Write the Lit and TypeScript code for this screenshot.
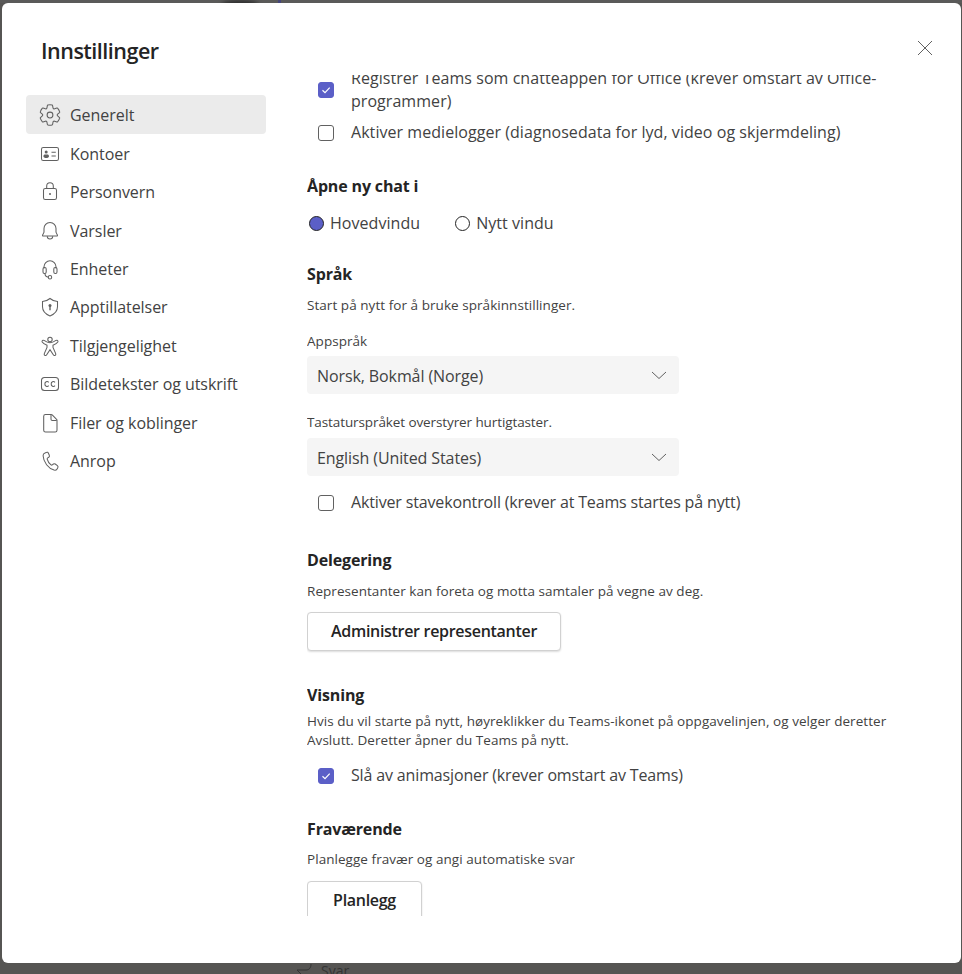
import { LitElement, html, css, svg } from "lit";
import { customElement } from "lit/decorators.js";

const navIcons = [
  svg`<path d="M2.3 8.9A10 10 0 0 1 4.4 5.2a.6.6 0 0 1 .65-.16l2.3.82a1.2 1.2 0 0 0 1.58-.91l.44-2.4a.6.6 0 0 1 .47-.48 10.2 10.2 0 0 1 4.27 0c.24.05.42.24.46.48l.44 2.4a1.2 1.2 0 0 0 1.58.91l2.3-.82a.6.6 0 0 1 .65.16 10 10 0 0 1 2.14 3.7c.07.24 0 .48-.18.65l-1.87 1.58a1.2 1.2 0 0 0 0 1.82l1.87 1.58c.18.17.25.41.18.65a10 10 0 0 1-2.14 3.7.6.6 0 0 1-.65.16l-2.3-.82a1.2 1.2 0 0 0-1.58.91l-.44 2.4a.6.6 0 0 1-.46.48 10.2 10.2 0 0 1-4.27 0 .6.6 0 0 1-.47-.48l-.44-2.4a1.2 1.2 0 0 0-1.58-.91l-2.3.82a.6.6 0 0 1-.65-.16 10 10 0 0 1-2.14-3.7.6.6 0 0 1 .18-.65l1.87-1.58a1.2 1.2 0 0 0 0-1.82L2.48 9.55a.6.6 0 0 1-.18-.65Z"/><circle cx="12" cy="12" r="2.9"/>`,
  svg`<rect x="3.5" y="5.5" width="17" height="13" rx="1.8"/><circle class="f" cx="8.2" cy="10" r="1.5"/><path class="f" d="M5.4 14.2c0-1 .8-1.6 1.6-1.6h2.4c.8 0 1.6.6 1.6 1.6 0 1.2-1.3 1.8-2.8 1.8s-2.8-.6-2.8-1.8Z"/><path d="M13.5 10.3h4.3M13.5 14h4.3"/>`,
  svg`<rect x="5.5" y="8.5" width="13" height="11" rx="1.8"/><path d="M8.7 8.5V6a3.3 3.3 0 0 1 6.6 0v2.5"/><circle class="f" cx="12" cy="14" r="1"/>`,
  svg`<path d="M12 3.5c-3.6 0-6 2.7-6 6v3.6l-1.4 3a.6.6 0 0 0 .55.9h13.7a.6.6 0 0 0 .55-.9l-1.4-3V9.500c0-3.300-2.400-6-6-6Z"/><path d="M9.300 17.200a2.700 2.700 0 0 0 5.400 0"/>`,
  svg`<path d="M6 11.500V9.800a6 6 0 0 1 12 0v1.700"/><rect x="5" y="10.500" width="3.200" height="6" rx="1.400"/><rect x="15.800" y="10.500" width="3.200" height="6" rx="1.400"/><path d="M7 16.500c0 2.200 1.700 3.500 3.500 3.700"/><circle cx="12" cy="20.300" r="1.700"/>`,
  svg`<path d="M12 3.500c2.200 1.900 4.400 2.800 7.500 3v5.300c0 4.300-2.500 7.200-7.500 9.200-5-2-7.500-4.900-7.500-9.200V6.500c3.100-.2 5.300-1.100 7.500-3Z"/><circle class="f" cx="12" cy="10.500" r="1.500"/><path d="M12 11v4.200" stroke-width="1.400"/>`,
  svg`<circle cx="12" cy="5.500" r="2.200"/><path d="M5 6.300c-.8.300-1.200 1-.8 1.800.3.500 3.500 2.600 4.800 3.100v2.200l-2.700 6.200c-.3.800 0 1.500.700 1.800.700.200 1.300 0 1.700-.7L12 15.600l3.300 5.100c.4.700 1 .9 1.700.7.700-.3 1-1 .7-1.800L15 13.400v-2.200c1.300-.5 4.500-2.600 4.800-3.100.4-.8 0-1.500-.8-1.800-.6-.2-1.100.1-1.500.4-1.700 1.300-3.500 2-5.500 2s-3.800-.7-5.500-2c-.4-.3-.9-.6-1.500-.4Z"/>`,
  svg`<rect x="3.500" y="5.500" width="17" height="13" rx="3"/><path d="M10.700 10.300a2.200 2.200 0 0 0-3.800 1.700 2.200 2.200 0 0 0 3.800 1.700M17 10.300a2.200 2.200 0 0 0-3.800 1.700 2.200 2.200 0 0 0 3.800 1.700"/>`,
  svg`<path d="M7.500 3.500h5.700c.4 0 .7.100 1 .4l4.400 4.400c.3.300.4.600.4 1v9.900c0 1-.8 1.800-1.800 1.800H7.500c-1 0-1.800-.8-1.800-1.800V5.300c0-1 .8-1.800 1.800-1.800Z"/><path d="M13 3.800v4.400c0 .7.600 1.300 1.300 1.300h4.400"/>`,
  svg`<path d="M8.800 3.300 7 3.900C5.800 4.300 5 5.400 5.100 6.800c.3 6.300 5.300 12.700 11 14.300 1.200.3 2.400-.2 3-1.200l.7-1.200c.4-.7.200-1.500-.4-2l-2.200-1.700c-.6-.4-1.300-.4-1.800 0l-1.100.9c-.4.300-.9.300-1.300 0-1.900-1.500-3.200-3.500-3.800-5.800-.1-.5.100-.9.500-1.200l1.100-.7c.6-.4.800-1.200.5-1.900l-1-2.300c-.3-.7-1-1-1.500-.7Z"/>`,
];

const navLabels = ["Generelt", "Kontoer", "Personvern", "Varsler", "Enheter", "Apptillatelser", "Tilgjengelighet", "Bildetekster og utskrift", "Filer og koblinger", "Anrop"];

@customElement("app-root")
export class AppRoot extends LitElement {
  static styles = css`
    :host { display: block; width: 962px; height: 974px; overflow: hidden; background: #565553;
      font-family: "Open Sans", "Noto Sans", sans-serif; color: #242424; font-size: 16px; letter-spacing: 0.05px; }
    * { box-sizing: border-box; }
    .top { height: 3px; display: flex; background: #5a5a59; overflow: hidden; }
    .blob { margin-left: 222px; width: 36px; height: 8px; border-radius: 50%; background: #2f2f2f; filter: blur(2px); }
    .mark { margin-left: 20px; width: 3px; height: 3px; background: #45457a; }
    .dialog { display: grid; grid-template-columns: 284px 1fr; width: 959px; height: 960px; margin: 0 0 0 2px;
      background: #fff; border-radius: 6px; }
    .side { padding: 0 0 0 24px; display: flex; flex-direction: column; }
    h1 { margin: 0; height: 92px; padding: 32px 0 0 15px; font-size: 21.500px; font-weight: 600; line-height: 32px; letter-spacing: -0.5px; }
    nav { display: flex; flex-direction: column; width: 240px; }
    .item { display: flex; align-items: center; gap: 8px; height: 38.450px; padding: 1px 0 0 12px; border-radius: 4px; color: #424242; line-height: 20px; letter-spacing: -0.05px; }
    .item.on { background: #ebebeb; height: 39px; padding-top: 0; }
    .ico { width: 24px; height: 24px; flex: none; fill: none; stroke: #616161; stroke-width: 1.050; }
    .ico .f { fill: #616161; stroke: none; }
    .main { min-width: 0; display: flex; flex-direction: column; padding-left: 21px; }
    .close { height: 72px; flex: none; display: flex; justify-content: flex-end; padding: 37px 28px 0 0; }
    .close svg { width: 16px; height: 16px; stroke: #616161; stroke-width: 1; fill: none; }
    .scroll { height: 841px; overflow: hidden; width: 610px; }
    .content { margin-top: -8px; display: flex; flex-direction: column; }
    .check { display: flex; align-items: center; gap: 17px; padding-left: 11px; line-height: 23px; color: #424242; }
    .tight { letter-spacing: -0.15px; }
    .box { width: 16px; height: 16px; flex: none; border: 1px solid #616161; border-radius: 3px;
      display: flex; align-items: center; justify-content: center; }
    .box.on { background: #5b5fc7; border-color: #5b5fc7; }
    .box svg { width: 12px; height: 12px; fill: none; stroke: #fff; stroke-width: 1.200; }
    h2 { margin: 0; font-size: 16px; font-weight: 700; line-height: 22px; letter-spacing: -0.15px; }
    .radios { display: flex; align-items: center; margin-top: 15px; height: 22px; color: #424242; }
    .radio { width: 15px; height: 15px; border-radius: 50%; border: 1px solid #242424; margin: 0 6px 0 2px; flex: none; }
    .radio.on { background: #5b5fc7; }
    .gap { width: 33px; flex: none; }
    .desc { margin: 0; font-size: 13.500px; line-height: 19px; color: #424242; letter-spacing: 0.05px; }
    .desc.tight { letter-spacing: -0.1px; }
    .select { display: flex; align-items: center; justify-content: space-between; width: 372px; height: 38px; background: #f5f5f5;
      border-radius: 4px; padding: 0 12px 0 10px; color: #424242; letter-spacing: -0.1px; }
    .select span { padding-top: 2px; }
    .select svg { width: 16px; height: 16px; fill: none; stroke: #616161; stroke-width: 1; }
    .btn { display: inline-flex; align-items: center; justify-content: center; height: 39px; border: 1px solid #d1d1d1; border-radius: 4px;
      background: #fff; font-weight: 600; box-shadow: 0 1px 2px rgba(0,0,0,.14); color: #242424; font-family: inherit; font-size: 16px; letter-spacing: -.3px; padding: 0 0 1px; flex: none; }
    .foot { height: 11px; overflow: hidden; display: flex; align-items: flex-start; gap: 8px; padding-left: 296px; color: #343434; font-size: 14px; }
    .foot svg { width: 17px; height: 11px; fill: none; stroke: #343434; stroke-width: 1; flex: none; }
    .foot span { line-height: 16px; }
  `;

  private box(on: boolean) {
    return html`<span class="box ${on ? "on" : ""}">${on ? html`<svg viewBox="0 0 12 12"><path d="M2.500 6.300 5 8.700 9.700 3.600"/></svg>` : ""}</span>`;
  }

  private chevron() {
    return html`<svg viewBox="0 0 16 16"><path d="M1 5l7 6.500L15 5"/></svg>`;
  }

  render() {
    return html`
      <div class="top"><span class="blob"></span><span class="mark"></span></div>
      <div class="dialog">
        <aside class="side">
          <h1>Innstillinger</h1>
          <nav>
            ${navLabels.map((l, i) => html`<div class="item ${i === 0 ? "on" : ""}"><svg class="ico" viewBox="0 0 24 24">${navIcons[i]}</svg><span>${l}</span></div>`)}
          </nav>
        </aside>
        <section class="main">
          <div class="close"><svg viewBox="0 0 16 16"><path d="M1 1l14 14M15 1 1 15"/></svg></div>
          <div class="scroll">
            <div class="content">
              <div class="check">${this.box(true)}<span>Registrer Teams som chatteappen for Office (krever omstart av Office-<br />programmer)</span></div>
              <div class="check" style="margin-top:8px">${this.box(false)}<span>Aktiver medielogger (diagnosedata for lyd, video og skjermdeling)</span></div>
              <h2 style="margin-top:31px">Åpne ny chat i</h2>
              <div class="radios"><span class="radio on"></span><span>Hovedvindu</span><span class="gap"></span><span class="radio"></span><span>Nytt vindu</span></div>
              <h2 style="margin-top:29px">Språk</h2>
              <p class="desc" style="margin-top:11px">Start på nytt for å bruke språkinnstillinger.</p>
              <p class="desc" style="margin-top:17px">Appspråk</p>
              <div class="select" style="margin-top:5px"><span>Norsk, Bokmål (Norge)</span>${this.chevron()}</div>
              <p class="desc tight" style="margin-top:19px">Tastaturspråket overstyrer hurtigtaster.</p>
              <div class="select" style="margin-top:6px"><span>English (United States)</span>${this.chevron()}</div>
              <div class="check tight" style="margin-top:15px">${this.box(false)}<span>Aktiver stavekontroll (krever at Teams startes på nytt)</span></div>
              <h2 style="margin-top:35px">Delegering</h2>
              <p class="desc" style="margin-top:11px">Representanter kan foreta og motta samtaler på vegne av deg.</p>
              <button class="btn" style="margin-top:11px;width:254px">Administrer representanter</button>
              <h2 style="margin-top:33px">Visning</h2>
              <p class="desc" style="margin-top:6px">Hvis du vil starte på nytt, høyreklikker du Teams-ikonet på oppgavelinjen, og velger deretter<br />Avslutt. Deretter åpner du Teams på nytt.</p>
              <div class="check tight" style="margin-top:14px">${this.box(true)}<span>Slå av animasjoner (krever omstart av Teams)</span></div>
              <h2 style="margin-top:31px">Fraværende</h2>
              <p class="desc" style="margin-top:10px">Planlegge fravær og angi automatiske svar</p>
              <button class="btn" style="margin-top:12px;width:115px">Planlegg</button>
            </div>
          </div>
        </section>
      </div>
      <div class="foot"><svg viewBox="0 0 17 11"><path d="M1 7h9c3 0 5-2 5-6M1 7l4 4"/></svg><span>Svar</span></div>
    `;
  }
}
